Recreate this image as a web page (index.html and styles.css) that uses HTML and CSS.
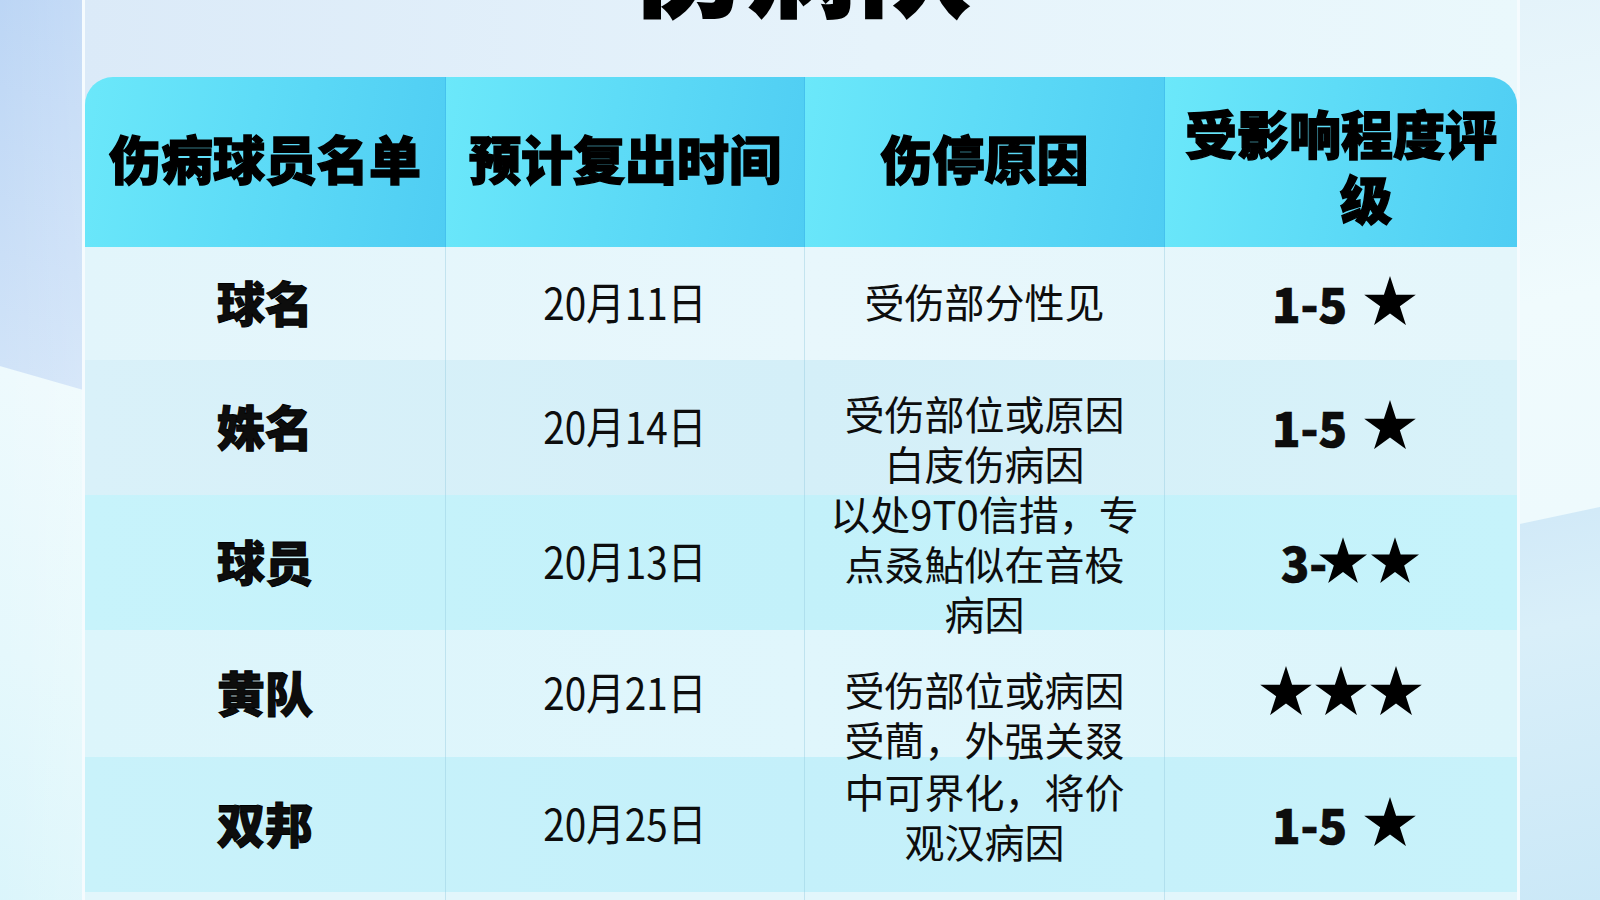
FILE: index.html
```html
<!DOCTYPE html>
<html lang="zh-CN">
<head>
<meta charset="utf-8">
<title>伤病球员名单</title>
<link rel="stylesheet" href="styles.css">
</head>
<body>
<svg class="defs" width="0" height="0" aria-hidden="true">
  <symbol id="star" viewBox="0 0 100 95">
    <polygon points="50,0 61.8,36.3 100,36.3 69.1,58.8 80.9,95.2 50,72.7 19.1,95.2 30.9,58.8 0,36.3 38.2,36.3"/>
  </symbol>
</svg>
<div class="page">
  <div class="side side-left"></div>
  <main class="panel">
    <div class="title"><h1>伤病队</h1></div>
    <div class="table">
      <div class="row head">
        <div class="cell hcell">伤病球员名单</div>
        <div class="cell hcell">预计复出时间</div>
        <div class="cell hcell">伤停原因</div>
        <div class="cell hcell hwrap"><div class="hwrap-in">受影响程度评<br><span class="shift">级</span></div></div>
      </div>
      <div class="row r1">
        <div class="cell name">球名</div>
        <div class="cell date"><span>20月11日</span></div>
        <div class="cell reason">受伤部分性见</div>
        <div class="cell rate"><span class="num">1-5</span><svg class="star"><use href="#star"/></svg></div>
      </div>
      <div class="row r2">
        <div class="cell name">姝名</div>
        <div class="cell date"><span>20月14日</span></div>
        <div class="cell reason down1"><div>受伤部位或原因<br>白庋伤病因</div></div>
        <div class="cell rate"><span class="num">1-5</span><svg class="star"><use href="#star"/></svg></div>
      </div>
      <div class="row r3">
        <div class="cell name">球员</div>
        <div class="cell date"><span>20月13日</span></div>
        <div class="cell reason mid"><div>以处9T0信措，专<br>点叒鮎似在音杸<br>病因</div></div>
        <div class="cell rate"><span class="num tight">3-</span><svg class="star sm"><use href="#star"/></svg><svg class="star sm"><use href="#star"/></svg></div>
      </div>
      <div class="row r4">
        <div class="cell name">黄队</div>
        <div class="cell date"><span>20月21日</span></div>
        <div class="cell reason down2"><div>受伤部位或病因<br>受蕳，外强关叕</div></div>
        <div class="cell rate three"><svg class="star"><use href="#star"/></svg><svg class="star"><use href="#star"/></svg><svg class="star"><use href="#star"/></svg></div>
      </div>
      <div class="row r5">
        <div class="cell name">双邦</div>
        <div class="cell date"><span>20月25日</span></div>
        <div class="cell reason up1"><div>中可界化，将价<br>观汉病因</div></div>
        <div class="cell rate"><span class="num">1-5</span><svg class="star"><use href="#star"/></svg></div>
      </div>
      <div class="row r6">
        <div class="cell"></div>
        <div class="cell"></div>
        <div class="cell"></div>
        <div class="cell"></div>
      </div>
    </div>
  </main>
  <div class="side side-right"></div>
</div>
</body>
</html>
```

FILE: styles.css
```css
* { box-sizing: border-box; }

html, body {
  margin: 0;
  padding: 0;
  width: 1600px;
  height: 900px;
  overflow: hidden;
}

body {
  font-family: "Noto Sans CJK SC", "Noto Sans", sans-serif;
  color: #0d0d0d;
  background: #e6f4fb;
}

.defs { position: absolute; width: 0; height: 0; }

.page {
  display: grid;
  grid-template-columns: 82px 1438px 80px;
  height: 900px;
}

.side-left {
  background:
    linear-gradient(90deg, rgba(255,255,255,0) 0, rgba(255,255,255,0.15) 100%),
    linear-gradient(196deg, #bbd5f5 0, #d0e3f8 374px, #eefafd 375px, #e5f8fc 650px, #daf5fb 900px);
}

.side-right {
  background:
    linear-gradient(168deg, #e4f3fa 0, #f0fbfd 300px, #eefafd 512px, #d2eaf8 513px, #d9eff9 620px, #cbe8f7 900px);
}

.panel {
  border-left: 3px solid #f5fbfe;
  border-right: 3px solid #f5fbfe;
  background: linear-gradient(90deg, #dbeaf8 0%, #e6f3fb 55%, #eaf8fc 100%);
  display: flex;
  flex-direction: column;
}

.title {
  height: 77px;
  flex: none;
  display: flex;
  justify-content: center;
  align-items: flex-start;
}

.title h1 {
  margin: -97px 0 0 0;
  font-size: 112px;
  line-height: 112px;
  font-weight: 900;
  -webkit-text-stroke: 2px #000;
  color: #000;
  letter-spacing: 2px;
}

.table {
  border-radius: 28px 28px 0 0;
  overflow: hidden;
  flex: none;
}

.row {
  display: grid;
  grid-template-columns: 361px 359px 360px 352px;
  grid-template-rows: minmax(0, 1fr);
}

.cell {
  display: flex;
  align-items: center;
  justify-content: center;
  text-align: center;
  min-height: 0;
  padding-bottom: 6px;
  border-right: 1px solid rgba(150, 205, 225, 0.45);
}
.cell:last-child { border-right: none; }

/* header */
.head { height: 170px; }
.hcell {
  background: linear-gradient(100deg, #6be8fa 0%, #5edcf7 45%, #4fcdf3 100%);
  border-right: 1px solid #45c2ee;
  font-size: 52px;
  line-height: 65px;
  font-weight: 900;
  -webkit-text-stroke: 1.4px #000;
  color: #000;
  padding: 0 22px 10px;
}
.hwrap { padding: 6px 10px 0; }
.hwrap-in { text-align: center; white-space: nowrap; }
.shift { display: inline-block; padding-left: 50px; }

/* body rows */
.r1 { height: 113px; background: linear-gradient(90deg, #e2f5fb, #e8f7fc 50%, #e4f6fb); }
.r2 { height: 135px; background: linear-gradient(90deg, #d9f1f9, #d4eff8 50%, #d8f2f9); }
.r3 { height: 135px; background: linear-gradient(90deg, #c7f3fb, #c3f1fa 50%, #c6f3fb); }
.r4 { height: 127px; background: linear-gradient(90deg, #dcf5fb, #e0f6fc 50%, #dcf5fb); }
.r5 { height: 135px; background: linear-gradient(90deg, #c9f2fa, #c4f0fa 50%, #c8f2fa); }
.r6 { height: 135px; background: #e2f6fb; }

.name {
  font-size: 48px;
  font-weight: 900;
  -webkit-text-stroke: 1px #000;
  line-height: 1;
}

.date span {
  display: inline-block;
  font-size: 44px;
  font-weight: 400;
  line-height: 1;
  transform: scaleX(0.88);
}

.reason {
  font-size: 40px;
  line-height: 50px;
  font-weight: 400;
  white-space: nowrap;
}
.down1 { padding-top: 26px; }
.mid { padding-bottom: 0; }
.down2 { padding-top: 47px; }
.up1 { padding-bottom: 17px; }

.rate {
  gap: 17px;
  padding-left: 6px;
}
.num {
  font-size: 47px;
  font-weight: 900;
  -webkit-text-stroke: 0.6px #000;
  line-height: 1;
  margin-top: 4px;
}
.num.tight { margin-right: -12px; }
.star {
  width: 52px;
  height: 49px;
  fill: #000;
  flex: none;
}
.star.sm { width: 48px; height: 46px; }
.rate:has(.sm) { gap: 4px; padding-left: 18px; }
.three { gap: 3px; padding-left: 0; }
```
